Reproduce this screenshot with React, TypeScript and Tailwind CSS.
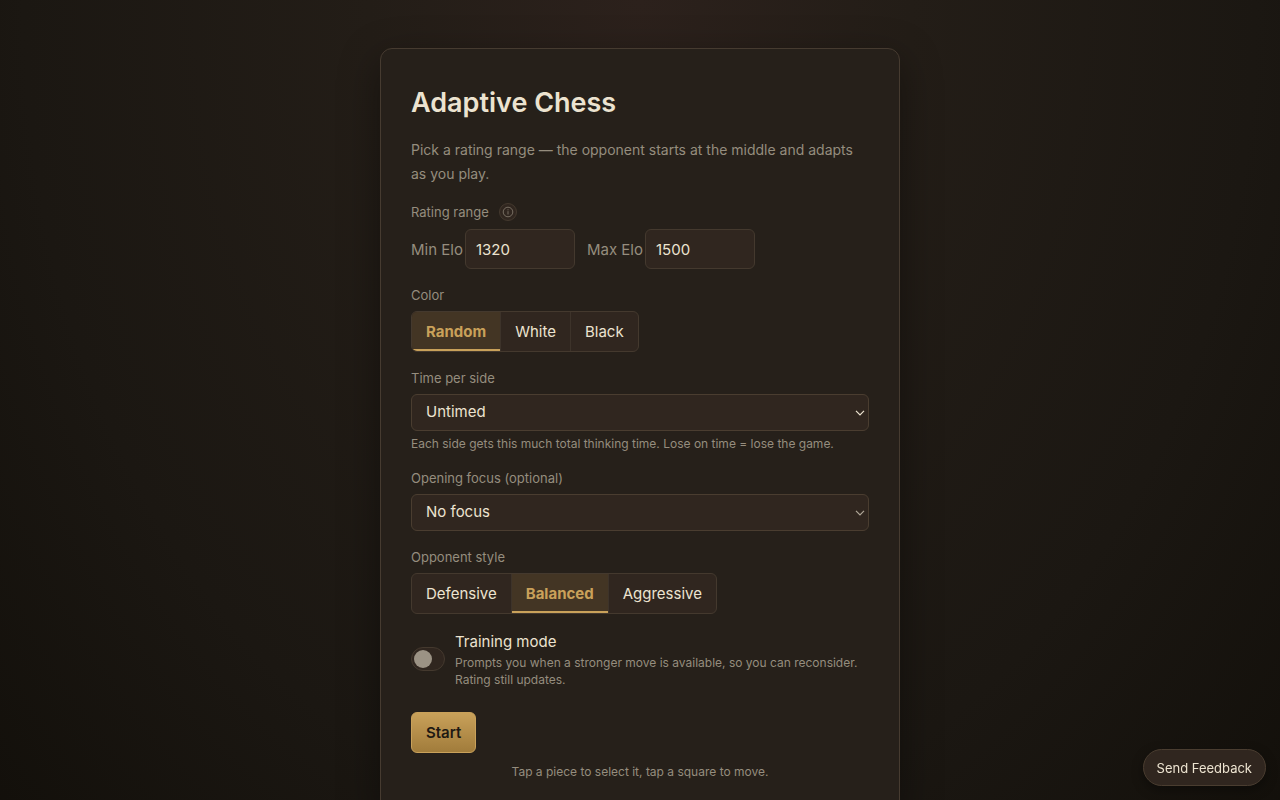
import { useState } from "react";
import type { ReactNode } from "react";

const labelClass = "text-[13px] leading-5 text-[#958d7e]";

function Segmented({
  name,
  legend,
  options,
  initial,
}: {
  name: string;
  legend: string;
  options: string[];
  initial: string;
}) {
  const [value, setValue] = useState(initial);
  return (
    <div role="group" aria-labelledby={name} className="flex flex-col items-start gap-1.5">
      <span id={name} className={labelClass}>
        {legend}
      </span>
      <div className="flex h-[41px] divide-x divide-[#3d332a] overflow-hidden rounded-md border border-[#44392e] bg-[#30261f]">
        {options.map((option) => (
          <button
            key={option}
            type="button"
            aria-pressed={value === option}
            onClick={() => setValue(option)}
            className={
              value === option
                ? "bg-[#433524] px-3.5 pt-0.5 text-[15px] font-bold text-[#c9a15a] shadow-[inset_0_-2px_0_#c9a15a]"
                : "px-3.5 pt-0.5 text-[15px] text-[#ece3d0]"
            }
          >
            {option}
          </button>
        ))}
      </div>
    </div>
  );
}

function SelectField({
  id,
  label,
  options,
  arrow,
  children,
}: {
  id: string;
  label: string;
  options: string[];
  arrow: string;
  children?: ReactNode;
}) {
  return (
    <div className="flex flex-col">
      <label htmlFor={id} className={labelClass}>
        {label}
      </label>
      <div className="mt-1.5 grid items-center">
        <select
          id={id}
          className="col-start-1 row-start-1 h-[37px] w-full appearance-none rounded-md border border-[#4a3d30] bg-[#30261f] px-3.5 text-[15px] text-[#ece3d0]"
        >
          {options.map((option) => (
            <option key={option}>{option}</option>
          ))}
        </select>
        <svg
          viewBox="0 0 10 6"
          className={`pointer-events-none col-start-1 row-start-1 mr-1 h-1.5 w-2.5 justify-self-end ${arrow}`}
          fill="none"
          stroke="currentColor"
          strokeWidth="1.2"
          aria-hidden="true"
        >
          <path d="M1 .8l4 4 4-4" />
        </svg>
      </div>
      {children}
    </div>
  );
}

function EloField({ id, label, value }: { id: string; label: string; value: number }) {
  return (
    <div className="flex items-baseline gap-0.5">
      <label htmlFor={id} className="text-[15px] text-[#958d7e]">
        {label}
      </label>
      <input
        id={id}
        type="text"
        inputMode="numeric"
        defaultValue={value}
        className="h-10 w-[110px] rounded-md border border-[#44392e] bg-[#30261f] px-2.5 text-[15px] text-[#ece3d0]"
      />
    </div>
  );
}

export default function App() {
  return (
    <div className="min-h-screen bg-[#14110c] bg-[radial-gradient(ellipse_at_top,#2c211c_0%,#231d17_30%,#1b1712_68%,#120f0a_100%)] px-4 pt-12 pb-12 font-[Inter,sans-serif] text-[15px] text-[#ece3d0]">
      <main className="mx-auto w-full max-w-[520px] rounded-xl border border-[#463b30] bg-[#26201a] px-[30px] pt-9 pb-8 shadow-[0_12px_40px_rgba(0,0,0,0.4)]">
        <h1 className="text-[27px] leading-9 font-semibold">Adaptive Chess</h1>
        <p className="mt-[17px] text-[14px] leading-6 text-[#958d7e]">
          Pick a rating range — the opponent starts at the middle and adapts as you play.
        </p>

        <form className="mt-4 flex flex-col gap-4" onSubmit={(event) => event.preventDefault()}>
          <div role="group" aria-labelledby="rating-range" className="flex flex-col gap-[7px]">
            <div className="flex items-center gap-2.5">
              <span id="rating-range" className={labelClass}>
                Rating range
              </span>
              <button
                type="button"
                aria-label="About rating range"
                className="flex size-[18px] items-center justify-center rounded-full border border-[#44392e] bg-[#30261f] text-[#958d7e]"
              >
                <svg viewBox="0 0 12 12" className="size-3" fill="none" stroke="currentColor" strokeWidth="0.7" aria-hidden="true">
                  <circle cx="6" cy="6" r="4.8" />
                  <path d="M6 5.2v3.3M6 3.3v1" />
                </svg>
              </button>
            </div>
            <div className="flex flex-wrap gap-3">
              <EloField id="min-elo" label="Min Elo" value={1320} />
              <EloField id="max-elo" label="Max Elo" value={1500} />
            </div>
          </div>

          <Segmented name="color" legend="Color" options={["Random", "White", "Black"]} initial="Random" />

          <SelectField id="time" label="Time per side" options={["Untimed", "5 minutes", "10 minutes"]} arrow="text-[#ece3d0]">
            <p className="mt-1 text-[12px] leading-[17px] text-[#958d7e]">
              Each side gets this much total thinking time. Lose on time = lose the game.
            </p>
          </SelectField>

          <SelectField id="opening" label="Opening focus (optional)" options={["No focus"]} arrow="text-[#b0a798]" />

          <Segmented
            name="style"
            legend="Opponent style"
            options={["Defensive", "Balanced", "Aggressive"]}
            initial="Balanced"
          />

          <label className="flex items-center gap-2.5">
            <input type="checkbox" role="switch" aria-label="Training mode" className="peer sr-only" />
            <span className="flex h-6 w-[34px] shrink-0 items-center rounded-full border border-[#44392e] bg-[#30261f] px-0.5 peer-checked:justify-end">
              <span className="size-[18px] rounded-full bg-[#9b9284]" />
            </span>
            <span className="flex flex-col">
              <span className="leading-6">Training mode</span>
              <span className="text-[12px] leading-[17px] text-[#958d7e]">
                Prompts you when a stronger move is available, so you can reconsider. Rating still updates.
              </span>
            </span>
          </label>

          <button
            type="submit"
            className="mt-2 h-[41px] self-start rounded-md border border-[#c9a15a] bg-linear-to-b from-[#c9a15a] to-[#a17c3b] px-3.5 pt-0.5 font-semibold text-[#1e1913]"
          >
            Start
          </button>
        </form>
        <p className="mt-2.5 text-center text-[12px] leading-[18px] text-[#958d7e]">
          Tap a piece to select it, tap a square to move.
        </p>
      </main>

      <button
        type="button"
        className="fixed right-3.5 bottom-3.5 h-[37px] rounded-full border border-[#4a3d30] bg-[#30261f] px-[13px] pt-0.5 text-[13px] shadow-[0_4px_12px_rgba(0,0,0,0.35)]"
      >
        Send Feedback
      </button>
    </div>
  );
}
